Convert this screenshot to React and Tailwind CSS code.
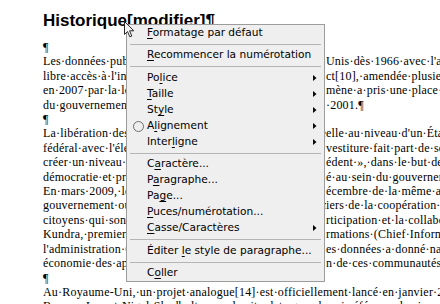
const lines = [
  ['¶', ''],
  ['Les·données·publiques·américaines·sont·en·libre·accès·aux·États-', 'Unis·dès·1966·avec·l\'adoption·du·Freedom·of·Information·Act'],
  ['libre·accès·à·l\'information·(Freedom·of·Information·A', 'ct[10],·amendée·plusieurs·fois·depuis'],
  ['en·2007·par·la·loi·OPEN·Government·Act.·Le·phéno', 'mène·a·pris·une·place·importante·au·sein'],
  ['du·gouvernement·fédéral·avec·l\'e-government·depuis', '·2001.¶'],
  ['¶', ''],
  ['La·libération·des·données·publiques·s\'est·manifestée·de·manière·offici', 'elle·au·niveau·d\'un·État'],
  ['fédéral·avec·l\'élection·de·Barack·Obama·dont·l\'in', 'vestiture·fait·part·de·son·souhait·de'],
  ['créer·un·niveau·de·transparence·«·sans·préc', 'édent·»,·dans·le·but·de·«·renforcer·la'],
  ['démocratie·et·promouvoir·l\'efficacité·et·l\'efficacit', 'é·au·sein·du·gouvernement·»'],
  ['En·mars·2009,·le·site·data.gov·est·lancé,·puis·en·d', 'écembre·de·la·même·année·la·directive'],
  ['gouvernement·ouvert·(Open·Government·Directive)·dont·les·pil', 'iers·de·la·coopération·et·des'],
  ['citoyens·qui·sont·la·transparence,·la·pa', 'rticipation·et·la·collaboration.·Vivek'],
  ['Kundra,·premier·directeur·des·systèmes·d\'info', 'rmations·(Chief·Information·Officer)'],
  ['l\'administration·Obama,·l\'ouverture·d', 'es·données·a·donné·naissance·à·une'],
  ['économie·des·applications·et·à·l\'émergence·d\'u', 'n·de·ces·communautés·de·développeurs'],
  ['¶', ''],
  ['Au·Royaume-Uni,·un·projet·analogue[14]·est·officiellement·lancé·en·janvier·2010', ''],
  ['Berners-Lee·et·Nigel·Shadbolt,·avec·le·site·data.gov.uk·qui·référence·les·jeux', ''],
];

const menu = [
  { type: 'item', parts: ['', 'F', 'ormatage par défaut'] },
  { type: 'sep', h: 'h-[6px]' },
  { type: 'item', parts: ['', 'R', 'ecommencer la numérotation'] },
  { type: 'sep', h: 'h-[7px]' },
  { type: 'item', parts: ['Po', 'l', 'ice'], sub: true },
  { type: 'item', parts: ['', 'T', 'aille'], sub: true },
  { type: 'item', parts: ['St', 'y', 'le'], sub: true },
  { type: 'item', parts: ['A', 'l', 'ignement'], sub: true, radio: true },
  { type: 'item', parts: ['Inter', 'l', 'igne'], sub: true },
  { type: 'sep', h: 'h-[6px]' },
  { type: 'item', parts: ['C', 'a', 'ractère...'] },
  { type: 'item', parts: ['P', 'a', 'ragraphe...'] },
  { type: 'item', parts: ['Pa', 'g', 'e...'] },
  { type: 'item', parts: ['', 'P', 'uces/numérotation...'] },
  { type: 'item', parts: ['', 'C', 'asse/Caractères'], sub: true },
  { type: 'sep', h: 'h-[7px]' },
  { type: 'item', parts: ['Éditer ', 'l', 'e style de paragraphe...'] },
  { type: 'sep', h: 'h-[6px]' },
  { type: 'item', parts: ['C', 'o', 'ller'] },
];

function MenuRow({ item }) {
  if (item.type === 'sep') {
    return (
      <div className={`${item.h} flex items-center px-[3px]`}>
        <div className="h-px w-full bg-[#b4b4b4]" />
      </div>
    );
  }
  const [a, u, b] = item.parts;
  return (
    <div className="relative h-4 flex items-center pl-5 pr-2">
      {item.radio && (
        <span className="absolute left-[6px] top-[2.5px] w-[11px] h-[11px] rounded-full border border-[#6e6e6e]" />
      )}
      <span className="flex-1 whitespace-nowrap">
        {a}
        <u className="underline-offset-[1.5px]">{u}</u>
        {b}
      </span>
      {item.sub && (
        <svg width="4" height="6" viewBox="0 0 4 6" className="mr-[-1px]">
          <polygon points="0,0 3.5,3 0,6" fill="#000" />
        </svg>
      )}
    </div>
  );
}

export default function App() {
  return (
    <div className="relative w-[440px] h-[304px] overflow-hidden bg-white pl-[43px] pt-[11px]">
      <h2 className="font-['Liberation_Sans',Arial,sans-serif] font-bold text-[17px] leading-[20px] text-black whitespace-nowrap">
        Historique[modifier]¶
      </h2>
      <div className="mt-[9px] font-['Liberation_Serif','Times_New_Roman',serif] text-[12px] tracking-[0.2px] leading-[14.4px] text-black">
        {lines.map(([left, right], i) => (
          <div key={i} className="flex whitespace-nowrap">
            <span className={right ? 'w-[283px] shrink-0 overflow-hidden' : ''}>{left}</span>
            {right && <span>{right}</span>}
          </div>
        ))}
      </div>

      <div className="absolute left-[126px] top-[24px] w-[199px] border border-[#9c9c9c] bg-[#efefef] font-['DejaVu_Sans',sans-serif] text-[10.6px] text-black">
        {menu.map((item, i) => (
          <MenuRow key={i} item={item} />
        ))}
      </div>

      <svg
        className="absolute left-[124px] top-[21px]"
        width="12"
        height="18"
        viewBox="0 0 12 18"
      >
        <path
          d="M0.5 0.5 L0.5 13.5 L3.5 10.5 L5.8 15.8 L7.8 15 L5.6 9.8 L9.8 9.8 Z"
          fill="#f4f4f4"
          stroke="#2a2a2a"
          strokeWidth="1"
          strokeLinejoin="round"
        />
      </svg>
    </div>
  );
}
